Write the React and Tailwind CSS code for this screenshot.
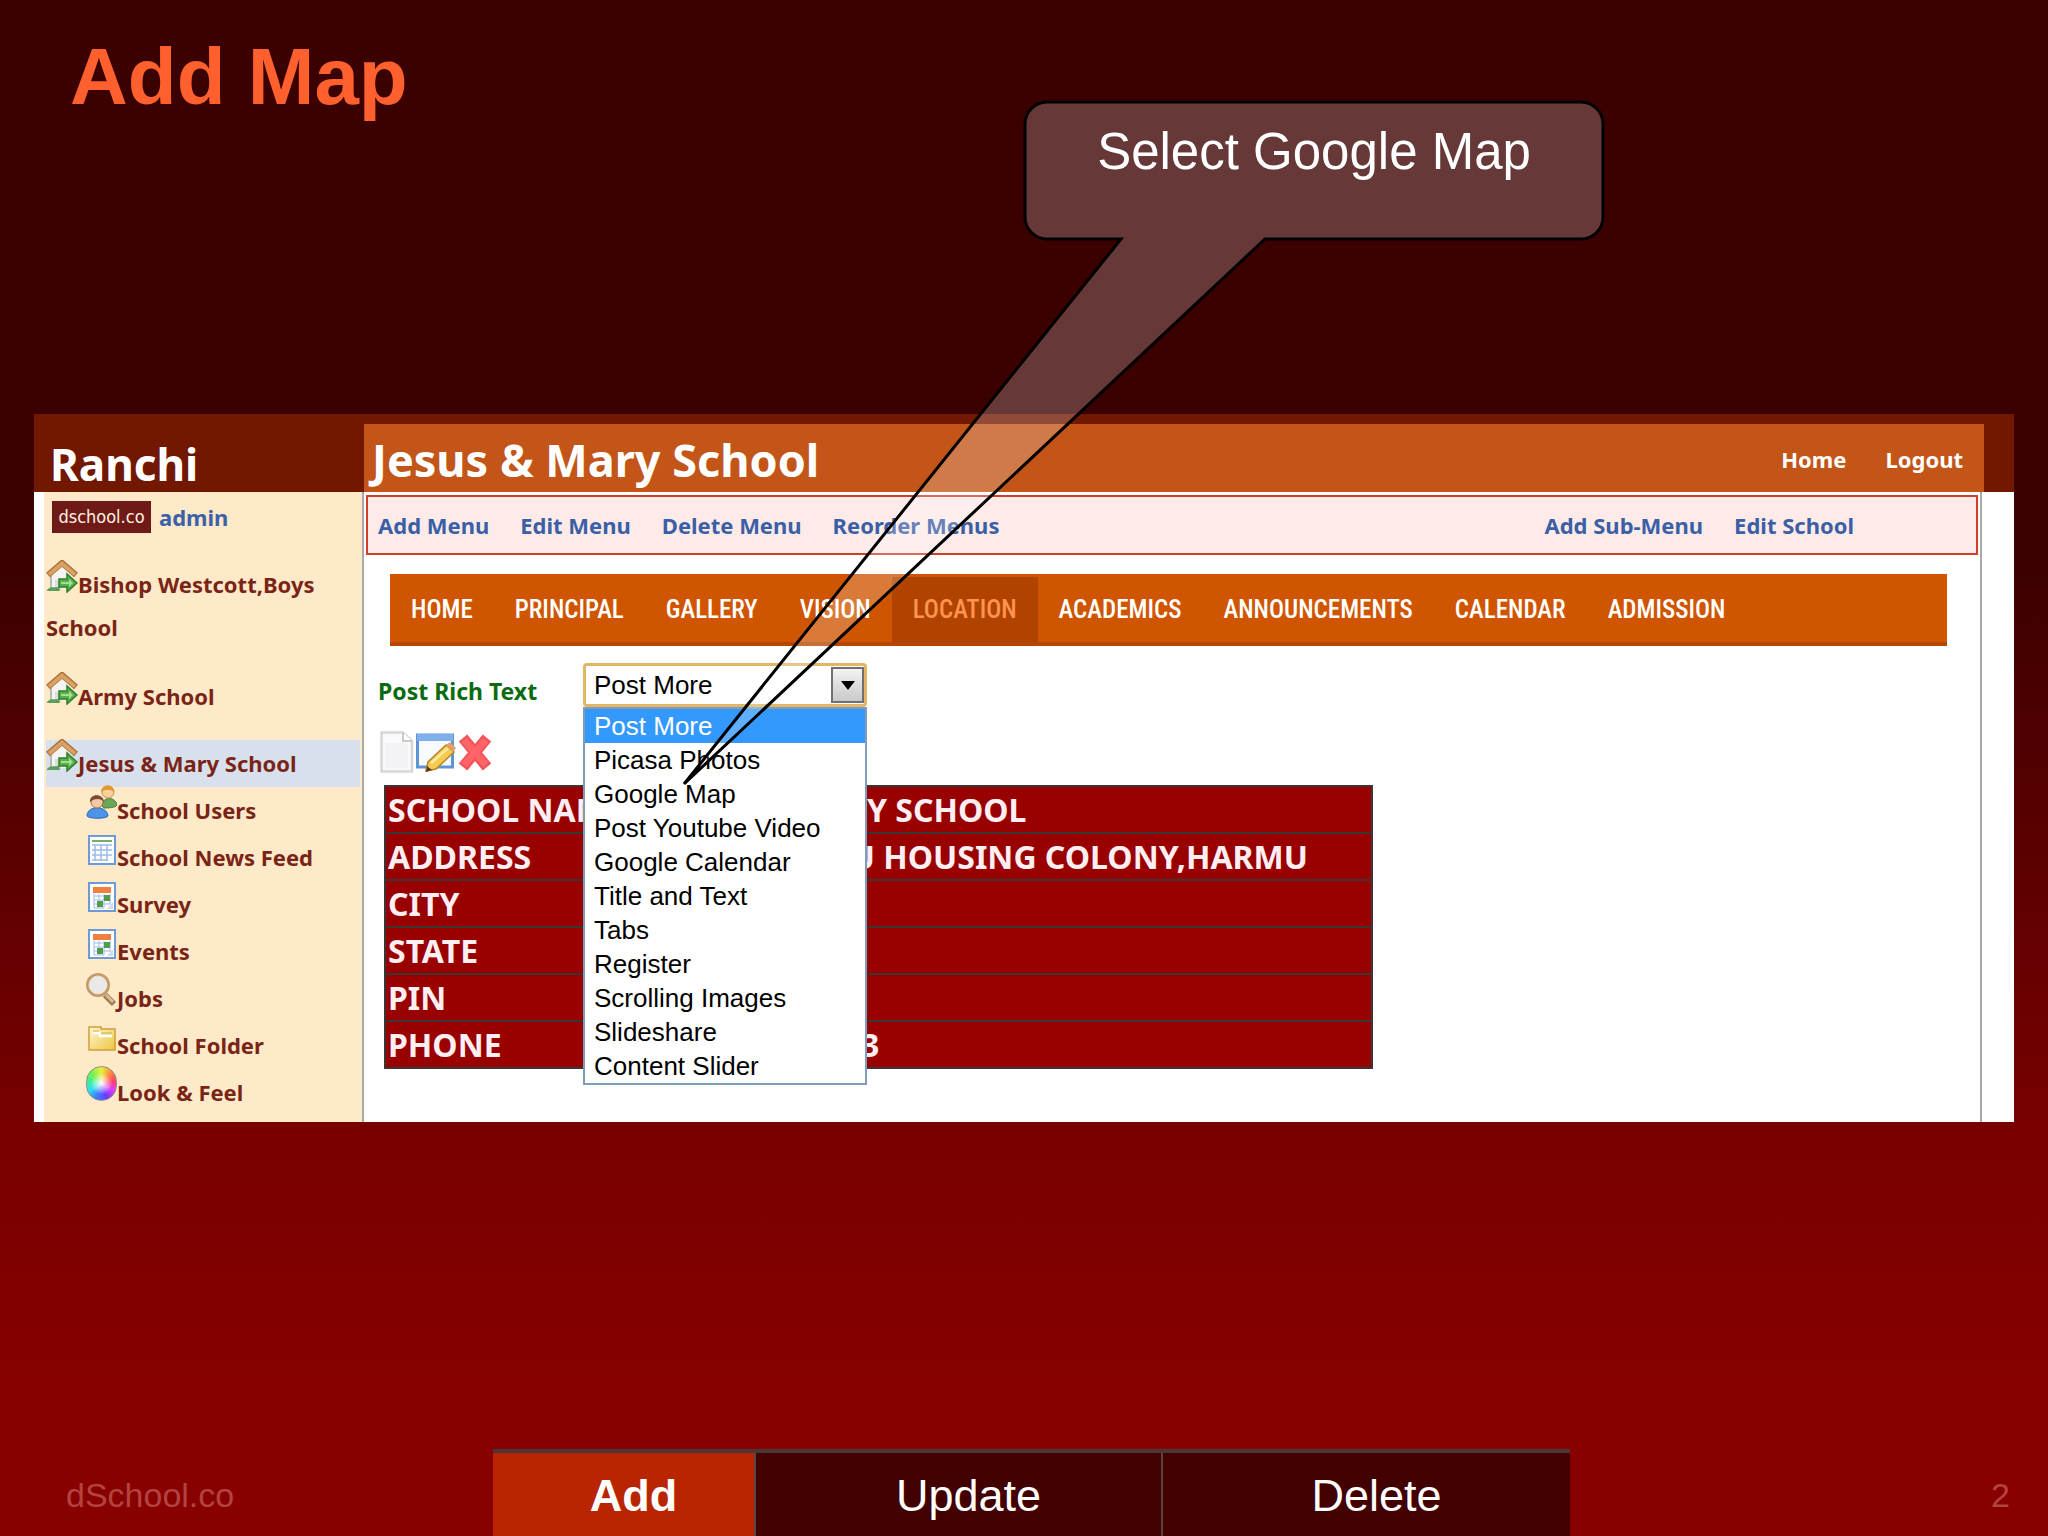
import { useState } from 'react'

const SCHOOLS = ['Bishop Westcott,Boys School', 'Army School', 'Jesus & Mary School']

const MENU_ACTIONS = ['Add Menu', 'Edit Menu', 'Delete Menu', 'Reorder Menus']
const SCHOOL_ACTIONS = ['Add Sub-Menu', 'Edit School']

const NAV = ['HOME', 'PRINCIPAL', 'GALLERY', 'VISION', 'LOCATION', 'ACADEMICS', 'ANNOUNCEMENTS', 'CALENDAR', 'ADMISSION']

const POST_OPTIONS = [
  'Post More', 'Picasa Photos', 'Google Map', 'Post Youtube Video', 'Google Calendar', 'Title and Text',
  'Tabs', 'Register', 'Scrolling Images', 'Slideshare', 'Content Slider'
]

const DETAILS = [
  { label: 'SCHOOL NAME', value: 'JESUS & MARY SCHOOL', pad: 'pl-[68px]' },
  { label: 'ADDRESS', value: 'HARMU HOUSING COLONY,HARMU', pad: 'pl-[156px]' },
  { label: 'CITY', value: '', pad: 'pl-[68px]' },
  { label: 'STATE', value: '', pad: 'pl-[68px]' },
  { label: 'PIN', value: '', pad: 'pl-[68px]' },
  { label: 'PHONE', value: '3', pad: 'pl-[264px]' }
]

function HouseIcon() {
  return (
    <svg viewBox="0 0 32 33" className="inline-block align-baseline -mt-1 w-8 h-[33px]" aria-hidden="true">
      <path d="M5 16 L16 6 L26 16 V29 H5 Z" fill="#f4f4f2" />
      <path d="M5 16 V29" stroke="#b9b9b4" strokeWidth="2" />
      <path d="M9 20h6v10H9z" fill="#dcdcd8" />
      <path d="M1 30 C4 26 8 28 13 27 L14 31 H1 Z" fill="#5c9f5c" />
      <path d="M2 15 L16 3 L30 15" fill="none" stroke="#a8703a" strokeWidth="6" />
      <path d="M3 14.500 L16 3.500 L29 14.500" fill="none" stroke="#dba163" strokeWidth="4" />
      <path d="M13 19 H21 V14 L31 23 L21 32 V27 H13 Z" fill="#58b04a" stroke="#2f7d2b" strokeWidth="1.500" />
      <path d="M15 22 H23 V19 L27 23 L23 27 V24 H15 Z" fill="#a5dc93" />
    </svg>
  )
}

function UsersIcon() {
  return (
    <svg viewBox="0 0 31 35" className="inline-block align-baseline -mt-1 w-[31px] h-[35px]" aria-hidden="true">
      <path d="M16 22 C16 13 28 12 31 20 C31 23 26 24 18 24 Z" fill="#6aa653" stroke="#47813a" />
      <circle cx="22" cy="8" r="6" fill="#f6cf9c" stroke="#c98b4c" />
      <path d="M15 8 C15 0 28 -1 28 8 C24 5 19 5 15 8 Z" fill="#e0992e" />
      <path d="M1 32 C1 21 21 21 22 32 C20 35 3 35 1 32 Z" fill="#4d94e8" stroke="#2c67b8" />
      <circle cx="11" cy="18" r="6" fill="#f3c9a4" stroke="#a86f4c" />
      <path d="M4 18 C3 9 18 9 18 18 C15 14 8 14 4 18 Z" fill="#7d4a33" />
    </svg>
  )
}

function FeedIcon() {
  return (
    <svg viewBox="0 0 31 31" className="inline-block align-baseline w-[31px] h-[31px]" aria-hidden="true">
      <rect x="3" y="1" width="26" height="28" fill="#fff" stroke="#6c9bd8" strokeWidth="2" />
      <path d="M6 6h20" stroke="#75ad62" strokeWidth="2" />
      <path d="M6 10h20M6 15h20M6 20h20M6 25h16M9 10v16M15 10v16M21 10v16" stroke="#9dbbe6" strokeWidth="1.500" />
    </svg>
  )
}

function CalendarIcon() {
  return (
    <svg viewBox="0 0 31 31" className="inline-block align-baseline w-[31px] h-[31px]" aria-hidden="true">
      <rect x="3" y="1" width="26" height="28" fill="#fff" stroke="#6c9bd8" strokeWidth="2" />
      <path d="M7 5h18v6H7z" fill="#f0803f" />
      <path d="M8 14h17M8 18h17M8 22h17M8 26h10M8 12v14M13 12v14M18 12v14M24 12v10" stroke="#9dbbe6" />
      <path d="M18 13h6v6h-6zM11 19h6v6h-6z" fill="#4f9d4c" />
      <path d="M21 27 L27 20 V27 Z" fill="#cfdcf0" />
    </svg>
  )
}

function SearchIcon() {
  return (
    <svg viewBox="0 0 31 35" className="inline-block align-baseline -mt-1 w-[31px] h-[35px]" aria-hidden="true">
      <path d="M19 23 L28 32" stroke="#a07a50" strokeWidth="6" />
      <path d="M20 23 L27 30" stroke="#dcc09a" strokeWidth="2.500" />
      <circle cx="12" cy="13" r="10.500" fill="#e9e9e9" stroke="#c29a6a" strokeWidth="3" />
      <circle cx="12" cy="13" r="9" fill="none" stroke="#f2dfc0" />
    </svg>
  )
}

function FolderIcon() {
  return (
    <svg viewBox="0 0 31 31" className="inline-block align-baseline w-[31px] h-[31px]" aria-hidden="true">
      <defs>
        <linearGradient id="folder" x1="0" y1="0" x2="1" y2="1">
          <stop offset="0" stopColor="#fdf6d4" />
          <stop offset="1" stopColor="#eec63e" />
        </linearGradient>
      </defs>
      <path d="M3 4 H15 V6 H29 V27 H3 Z" fill="url(#folder)" stroke="#cf9f38" strokeWidth="1.500" />
      <path d="M7 10h7v3h12" fill="none" stroke="#fff" strokeWidth="2.500" />
      <path d="M7 8h6M15 10h11" stroke="#d8a93c" />
    </svg>
  )
}

function ColorWheel() {
  return (
    <span className="inline-block align-baseline -mt-1 w-[31px] h-[35px] rounded-full border border-[#8c8c8c] bg-[radial-gradient(circle,white,transparent_50%),conic-gradient(#e8f03c,#ff8a3c,#ff3f6c,#e03cff,#6a3cff,#3c7cff,#2ee0f0,#3cf08c,#7cf04c,#e8f03c)]" />
  )
}

const SCHOOL_LINKS = [
  { label: 'School Users', Icon: UsersIcon },
  { label: 'School News Feed', Icon: FeedIcon },
  { label: 'Survey', Icon: CalendarIcon },
  { label: 'Events', Icon: CalendarIcon },
  { label: 'Jobs', Icon: SearchIcon },
  { label: 'School Folder', Icon: FolderIcon },
  { label: 'Look & Feel', Icon: ColorWheel }
]

function Sidebar() {
  return (
    <aside className="w-[330px] shrink-0 flex flex-col font-['Noto_Sans',sans-serif] font-bold">
      <div className="h-[78px] flex items-end pl-4 pb-1">
        <h2 className="text-[44px] leading-[48px] text-white">Ranchi</h2>
      </div>
      <div className="flex-1 bg-white border-r-2 border-[#a9a9a9] pl-2.5">
        <div className="h-full bg-[#fee9c8] px-0.5 text-[22px] text-[#7a2416]">
          <div className="flex items-center gap-2 pl-1.5 pt-[9px]">
            <span className="w-[99px] h-8 bg-[#701a17] text-[#fff3e0] text-[18px] font-normal leading-8 text-center font-['DejaVu_Sans_Condensed',sans-serif]">dschool.co</span>
            <a href="#admin" className="text-[#3b62a8] leading-8">admin</a>
          </div>
          <ul className="pt-[30px]">
            {SCHOOLS.map((name, i) => (
              <li key={name} className={i === 2 ? 'bg-[#d8e0ee] leading-[47px] mt-5 h-[47px]' : i === 1 ? 'leading-[47px] h-[47px] mt-6' : 'leading-[43px]'}>
                <a href={`#school-${i}`}><HouseIcon />{name}</a>
              </li>
            ))}
          </ul>
          <ul className="pl-10 pb-[6px]">
            {SCHOOL_LINKS.map(({ label, Icon }) => (
              <li key={label} className="h-[47px] leading-[47px]">
                <a href={`#${label}`}><Icon />{label}</a>
              </li>
            ))}
          </ul>
        </div>
      </div>
    </aside>
  )
}

function PostPicker() {
  const [post, setPost] = useState('Post More')
  return (
    <div className="relative w-[284px] font-['Liberation_Sans',Arial,sans-serif] text-[26px] text-black">
      <select id="post" value={post} onChange={e => setPost(e.target.value)}
        className="block w-full h-[44px] appearance-none bg-white border-[3px] border-[#e2b664] rounded-sm pl-2 outline-none">
        {POST_OPTIONS.map(o => <option key={o}>{o}</option>)}
      </select>
      <span className="absolute right-[3px] top-1 w-[33px] h-9 border-2 border-[#707070] bg-linear-to-b from-[#f4f4f4] to-[#c9c9c9] flex items-center justify-center pointer-events-none">
        <svg viewBox="0 0 14 9" className="w-3.5 h-[9px]"><path d="M0 0h14L7 9z" /></svg>
      </span>
      <ul role="listbox" aria-label="Post options" className="absolute z-10 top-full inset-x-0 bg-white border-2 border-[#7f9db9] leading-[34px]">
        {POST_OPTIONS.map(o => (
          <li key={o} role="option" aria-selected={o === post} onClick={() => setPost(o)}
            className={`pl-[9px] ${o === post ? 'bg-[#3399ff] text-white' : ''}`}>
            {o}
          </li>
        ))}
      </ul>
    </div>
  )
}

function Toolbar() {
  return (
    <div className="flex items-center gap-0.5 pl-4 mt-6">
      <button aria-label="New">
        <svg viewBox="0 0 34 42" className="w-[34px] h-[42px]">
          <path d="M1.500 1.500 H23 L32 10 V40.500 H1.500 Z" fill="#fafafa" stroke="#d6d6d6" strokeWidth="2.500" />
          <path d="M5 12 H28 V37 H5 Z" fill="#f3f3f5" />
          <path d="M23 1.500 V10 H32" fill="#fff" stroke="#c9c9c9" strokeWidth="2" />
        </svg>
      </button>
      <button aria-label="Edit">
        <svg viewBox="0 0 40 42" className="w-10 h-[42px]">
          <rect x="1.500" y="4" width="35" height="32" fill="#f7fafe" stroke="#5e93d6" strokeWidth="3" />
          <path d="M1 3h36v7H1z" fill="#7fb0ea" />
          <path d="M10 40 L12 31 L30 14 L38 21 L20 38 Z" fill="#f3cc4e" stroke="#b98427" strokeWidth="1.500" />
          <path d="M15 32 L32 17" stroke="#fbe79c" strokeWidth="3" />
          <path d="M30 14 L34 11 L40 17 L37 21 Z" fill="#e3a06c" />
          <path d="M10 41 L11 35 L16 39 Z" fill="#5b3a1c" />
        </svg>
      </button>
      <button aria-label="Delete">
        <svg viewBox="0 0 34 38" className="w-[34px] h-[38px]">
          <path d="M5 5 L29 34 M29 5 L5 34" stroke="#f25458" strokeWidth="11" />
          <path d="M6 7 L28 32 M28 7 L6 32" stroke="#ff6468" strokeWidth="7" />
        </svg>
      </button>
    </div>
  )
}

function SchoolPage() {
  return (
    <main className="flex-1 flex flex-col pt-2.5 font-['Noto_Sans',sans-serif]">
      <header className="h-[68px] bg-[#c35518] text-white font-bold flex items-end justify-between pl-2 pr-[21px] pb-2">
        <h2 className="text-[45px] leading-[48px]">Jesus &amp; Mary School</h2>
        <nav className="flex gap-[39px] text-[22px] leading-[50px]">
          <a href="#home">Home</a>
          <a href="#logout">Logout</a>
        </nav>
      </header>

      <div className="flex-1 bg-white border-r-2 border-[#a9a9a9] mr-0.5 pt-[3px] pb-[53px]">
        <div className="h-[60px] mx-0.5 border-2 border-[#d04028] bg-[#feebe9] flex items-center justify-between pl-2.5 pr-[122px] text-[22px] font-bold text-[#3b5fa5]">
          <div className="flex gap-[31px]">
            {MENU_ACTIONS.map(a => <a key={a} href={`#${a}`}>{a}</a>)}
          </div>
          <div className="flex gap-[31px]">
            {SCHOOL_ACTIONS.map(a => <a key={a} href={`#${a}`}>{a}</a>)}
          </div>
        </div>

        <nav className="mt-[19px] ml-[26px] mr-[33px] h-[72px] bg-[#d05500] border-b-4 border-[#b54600] pt-[3px] flex text-[25px] font-medium text-white font-['Roboto_Condensed','Liberation_Sans',sans-serif]">
          {NAV.map(item => (
            <a key={item} href={`#${item}`}
              className={`px-[21px] h-full leading-[66px] ${item === 'LOCATION' ? 'bg-[#b04300] text-[#ff9350]' : ''}`}>
              {item}
            </a>
          ))}
        </nav>

        <div className="flex items-center mt-[17px] pl-3.5">
          <label htmlFor="post" className="w-[205px] pt-3 text-[23px] leading-8 font-bold text-[#0a6b10]">Post Rich Text</label>
          <PostPicker />
        </div>

        <Toolbar />

        <table className="mt-3 ml-5 w-[989px] table-fixed border-collapse border-2 border-[#3d3434] bg-[#990000] text-[32px] leading-10 font-bold text-[#ffeef2]">
          <tbody>
            {DETAILS.map(row => (
              <tr key={row.label} className="h-[47px] border-2 border-[#3d3434]">
                <th scope="row" className="w-[212px] p-0 pl-0.5 text-left whitespace-nowrap">{row.label}</th>
                <td className={`p-0 whitespace-nowrap ${row.pad}`}>{row.value}</td>
              </tr>
            ))}
          </tbody>
        </table>
      </div>
    </main>
  )
}

function Callout() {
  return (
    <div className="absolute z-20 left-[680px] top-[100px] w-[926px] h-[688px] pointer-events-none">
      <svg viewBox="0 0 926 688" className="absolute inset-0 w-full h-full" aria-hidden="true">
        <path d="M367 2 H901 A22 22 0 0 1 923 24 V117 A22 22 0 0 1 901 139 H585 L4 684 L441 139 H367 A22 22 0 0 1 345 117 V24 A22 22 0 0 1 367 2 Z"
          fill="#ffffff" fillOpacity="0.22" stroke="#000000" strokeWidth="3" />
      </svg>
      <p className="relative ml-[342px] pt-[22px] text-center text-[51px] leading-[60px] text-white">Select Google Map</p>
    </div>
  )
}

export default function App() {
  const [tab, setTab] = useState('Add')
  return (
    <div className="relative min-h-screen flex flex-col bg-[linear-gradient(to_bottom,#3b0000_36%,#780000_73%,#880000_92%)] font-['Liberation_Sans',Arial,sans-serif]">
      <h1 className="pl-[70px] pt-[31px] text-[80px] leading-[92px] font-bold text-[#ff602d]">Add Map</h1>

      <section className="mx-[34px] mt-[291px] flex bg-[#731800]">
        <Sidebar />
        <SchoolPage />
        <div className="w-[30px] shrink-0 pt-[78px] flex">
          <div className="flex-1 bg-white -ml-0.5" />
        </div>
      </section>

      <Callout />

      <footer className="mt-auto h-[87px] flex items-stretch text-[34px] text-[#b34340]">
        <span className="w-[493px] pl-[66px] leading-[92px]">dSchool.co</span>
        <nav className="flex border-t-4 border-[#4a3636] text-[45px] text-white divide-x-2 divide-[#5a4444]">
          {[['Add', 'w-[263px]'], ['Update', 'w-[407px]'], ['Delete', 'w-[407px]']].map(([name, width]) => (
            <button key={name} onClick={() => setTab(name)}
              className={`${width} pt-0.5 pl-5 ${tab === name ? 'bg-[#b82500] font-bold' : 'bg-[#420000]'}`}>
              {name}
            </button>
          ))}
        </nav>
        <span className="ml-auto pr-[38px] leading-[92px]">2</span>
      </footer>
    </div>
  )
}
